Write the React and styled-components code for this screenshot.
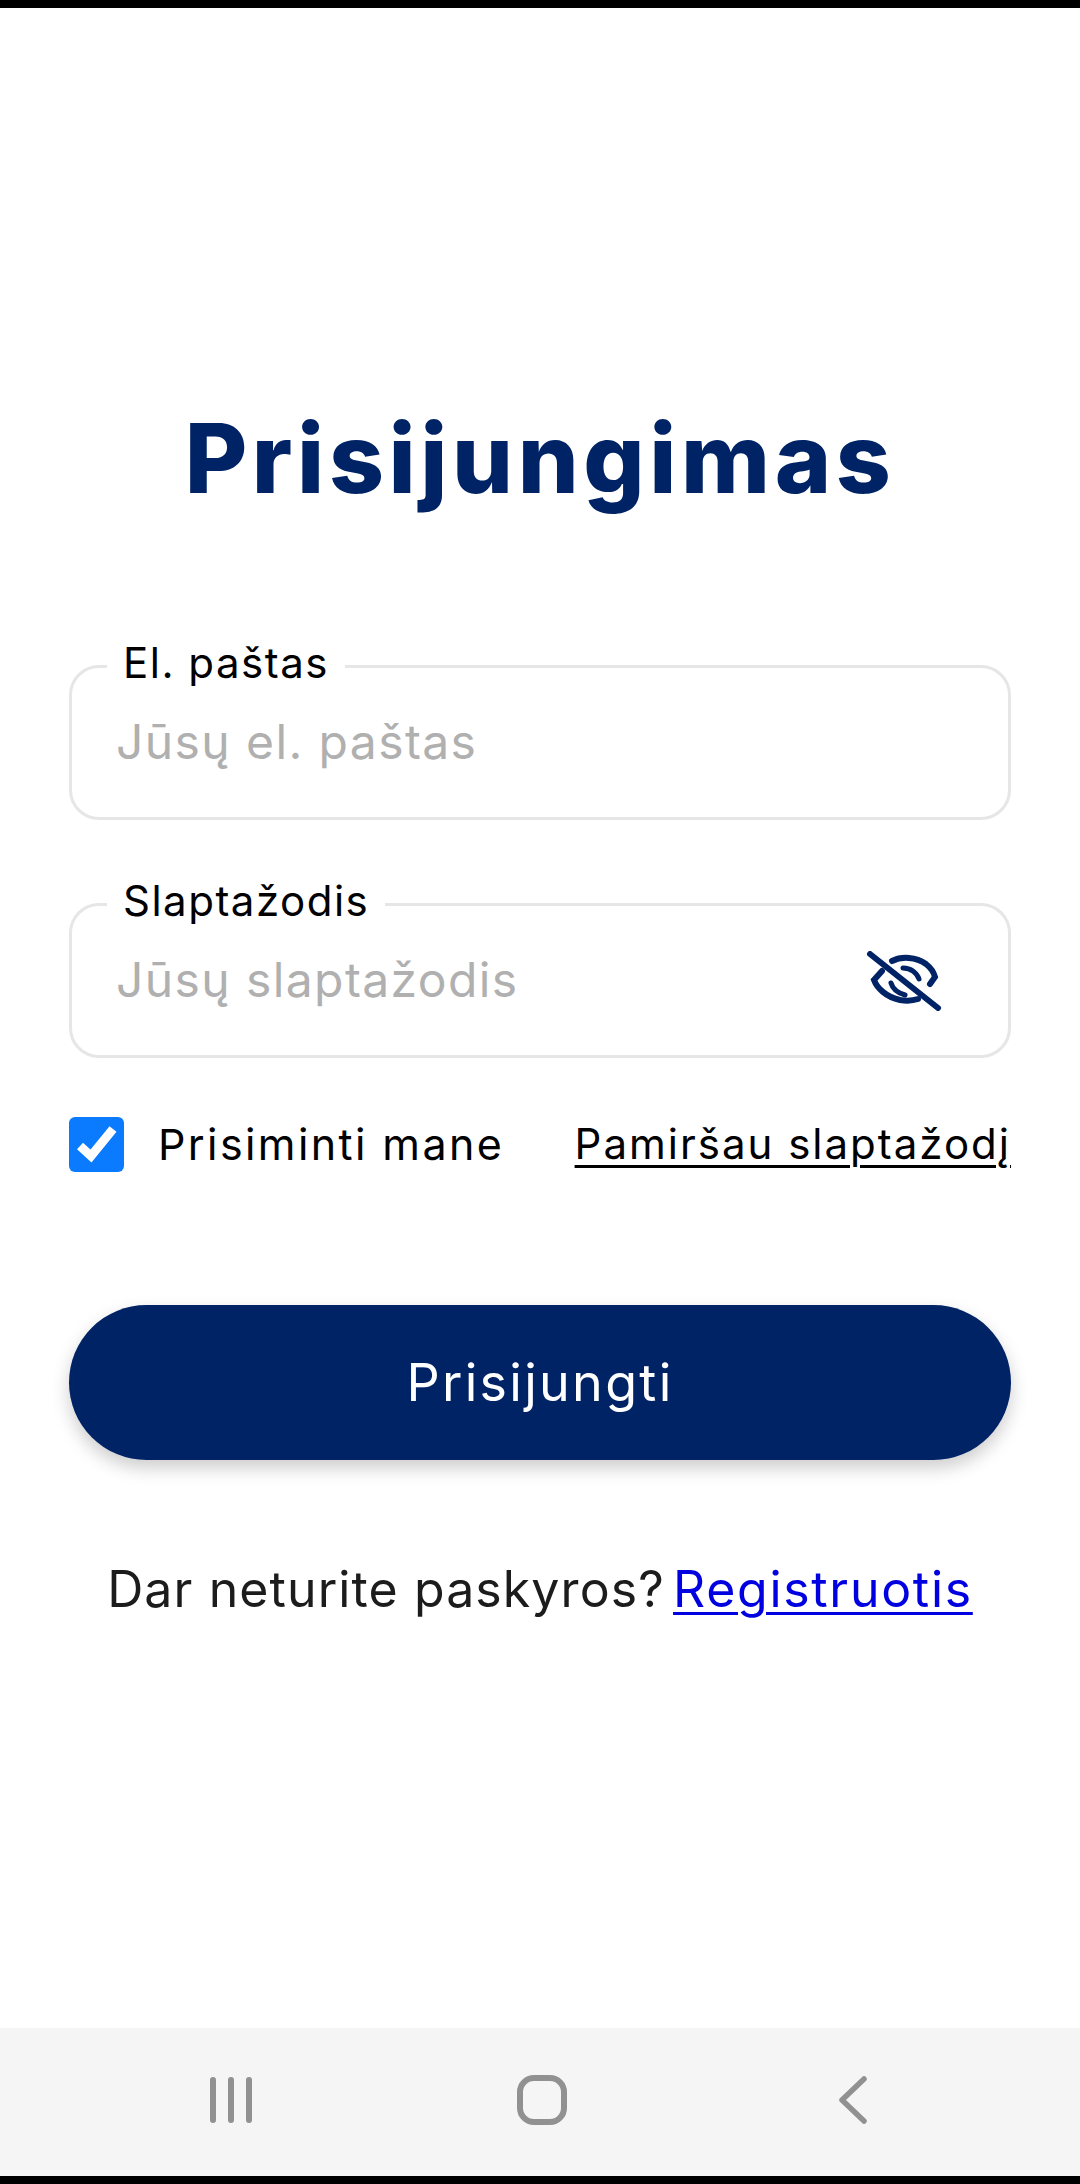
import React from "react";
import styled, { createGlobalStyle } from "styled-components";

const COLORS = {
  navy: "#002366",
  border: "#e6e6e6",
  placeholder: "#b0b0b0",
  nav: "#f5f5f5",
  navIcon: "#919191",
};

const GlobalStyle = createGlobalStyle`
  html, body {
    margin: 0;
    padding: 0;
    background: #fff;
    font-family: "Inter", "Noto Sans", sans-serif;
  }
  * { box-sizing: border-box; }
`;

const Page = styled.div`
  width: 1080px;
  height: 2184px;
  display: flex;
  flex-direction: column;
  overflow: hidden;
`;

const BlackBar = styled.div`
  height: 8px;
  flex: none;
  background: #000;
`;

const Main = styled.main`
  flex: 1;
  padding: 400px 69px 0 69px;
  display: flex;
  flex-direction: column;
`;

const Title = styled.h1`
  margin: 0;
  height: 100px;
  font-size: 96px;
  line-height: 100px;
  font-weight: 800;
  letter-spacing: 4.6px;
  text-align: center;
  color: ${COLORS.navy};
`;

const Form = styled.form`
  margin-top: 157px;
  display: flex;
  flex-direction: column;
  gap: 83px;
`;

const Field = styled.div`
  position: relative;
  height: 155px;
  padding: 0 48px 0 44px;
  display: flex;
  align-items: center;
  justify-content: space-between;
  border: 3px solid ${COLORS.border};
  border-radius: 30px;
`;

const FieldLabel = styled.label`
  position: absolute;
  left: 35px;
  top: -32px;
  padding: 0 16px;
  background: #fff;
  font-size: 42px;
  line-height: 54px;
  letter-spacing: 1.5px;
  color: #000;
`;

const Input = styled.input`
  flex: 1;
  min-width: 0;
  height: 60px;
  margin-top: -2px;
  padding: 0;
  border: 0;
  outline: 0;
  background: transparent;
  font-family: inherit;
  font-size: 48px;
  letter-spacing: 1.4px;
  color: #000;

  &::placeholder {
    color: ${COLORS.placeholder};
    opacity: 1;
  }
`;

const EyeButton = styled.span`
  width: 76px;
  height: 60px;
  margin-right: 18px;
  flex: none;
  display: block;
`;

const OptionsRow = styled.div`
  height: 56px;
  margin-top: -25px;
  display: flex;
  align-items: center;
  justify-content: space-between;
`;

const Remember = styled.label`
  display: flex;
  align-items: center;
  gap: 34px;
  font-size: 43px;
  line-height: 56px;
  letter-spacing: 2.4px;
  color: #000;
`;

const CheckBox = styled.span`
  width: 55px;
  height: 55px;
  flex: none;
  border-radius: 6px;
  background: #0a7aff;
  display: flex;
  align-items: center;
  justify-content: center;
`;

const ForgotLink = styled.a`
  font-size: 42px;
  line-height: 56px;
  letter-spacing: 2px;
  color: #000;
  text-decoration: underline;
  text-decoration-thickness: 3px;
  text-underline-offset: 6px;
`;

const SubmitButton = styled.button`
  height: 155px;
  margin-top: 50px;
  border: 0;
  border-radius: 78px;
  background: ${COLORS.navy};
  box-shadow: 0 8px 18px rgba(0, 0, 0, 0.2);
  font-family: inherit;
  font-size: 52px;
  letter-spacing: 2.3px;
  color: #fff;
`;

const SignUp = styled.p`
  margin: 97px 0 0;
  font-size: 50px;
  line-height: 64px;
  letter-spacing: 1.1px;
  text-align: center;
  color: #1c1c1c;

  a {
    margin-left: -7px;
    letter-spacing: 1.7px;
    color: #0000e0;
    text-decoration: underline;
    text-decoration-thickness: 3px;
    text-underline-offset: 5px;
  }
`;

const NavBar = styled.nav`
  height: 148px;
  flex: none;
  padding: 0 0 4px 75px;
  display: grid;
  grid-template-columns: repeat(3, 311px);
  align-items: center;
  justify-items: center;
  background: ${COLORS.nav};
`;

const NavIcon = styled.svg`
  display: block;
  color: ${COLORS.navIcon};
`;

function EyeOffIcon() {
  return (
    <svg viewBox="0 0 76 60" width="76" height="60" fill="none" stroke={COLORS.navy} strokeWidth="6" strokeLinecap="round">
      <path d="M4 3 L72 57" />
      <path d="M26 10 C36 5 50 6 60 13 C65 17 68 22 69 26 L64 33" />
      <path d="M16 20 L8 29 C11 37 20 46 34 49 C40 50 46 50 52 48" />
      <path d="M37 17 C45 17 51 22 53 28" strokeWidth="5" />
      <path d="M25 32 C27 39 32 42 39 44" strokeWidth="5" />
    </svg>
  );
}

function CheckIcon() {
  return (
    <svg viewBox="0 0 40 38" width="40" height="38" fill="none" stroke="#fff" strokeWidth="9">
      <path d="M3 21 L14 31 L36 4" />
    </svg>
  );
}

export default function App() {
  return (
    <Page>
      <GlobalStyle />
      <BlackBar />
      <Main>
        <Title>Prisijungimas</Title>
        <Form onSubmit={(e) => e.preventDefault()}>
          <Field>
            <FieldLabel htmlFor="email">El. paštas</FieldLabel>
            <Input id="email" type="text" placeholder="Jūsų el. paštas" />
          </Field>
          <Field>
            <FieldLabel htmlFor="password">Slaptažodis</FieldLabel>
            <Input id="password" type="password" placeholder="Jūsų slaptažodis" />
            <EyeButton>
              <EyeOffIcon />
            </EyeButton>
          </Field>
          <OptionsRow>
            <Remember>
              <CheckBox>
                <CheckIcon />
              </CheckBox>
              Prisiminti mane
            </Remember>
            <ForgotLink href="#">Pamiršau slaptažodį</ForgotLink>
          </OptionsRow>
          <SubmitButton type="submit">Prisijungti</SubmitButton>
        </Form>
        <SignUp>
          Dar neturite paskyros? <a href="#">Registruotis</a>
        </SignUp>
      </Main>
      <NavBar>
        <NavIcon width="46" height="46" viewBox="0 0 46 46" fill="none" stroke="currentColor" strokeWidth="6" strokeLinecap="round">
          <path d="M5 3 V43 M23 3 V43 M41 3 V43" />
        </NavIcon>
        <NavIcon width="50" height="50" viewBox="0 0 50 50" fill="none" stroke="currentColor" strokeWidth="6">
          <rect x="3" y="3" width="44" height="44" rx="14" />
        </NavIcon>
        <NavIcon width="30" height="48" viewBox="0 0 30 48" fill="none" stroke="currentColor" strokeWidth="5.5" strokeLinecap="round" strokeLinejoin="round">
          <path d="M26 3 L4 24 L26 45" />
        </NavIcon>
      </NavBar>
      <BlackBar />
    </Page>
  );
}
